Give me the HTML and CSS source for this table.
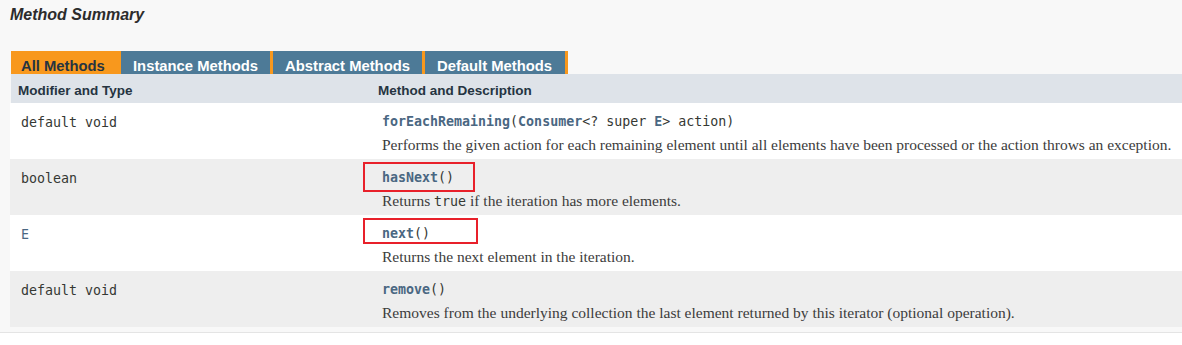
FILE: index.html
```html
<!DOCTYPE html>
<html>
<head>
<meta charset="utf-8">
<link rel="stylesheet" href="styles.css">
</head>
<body>
<div class="page">
  <h3 class="title">Method Summary</h3>
  <div class="tabs">
    <span class="tab tab-active t1">All Methods</span>
    <span class="tab t2">Instance Methods</span>
    <span class="tab t3">Abstract Methods</span>
    <span class="tab t4">Default Methods</span>
  </div>
  <div class="table">
    <div class="row head">
      <div class="c1">Modifier and Type</div>
      <div class="c2">Method and Description</div>
    </div>
    <div class="row odd">
      <div class="c1"><code>default void</code></div>
      <div class="c2">
        <div class="sig"><code><span class="link">forEachRemaining</span>(<span class="link">Consumer</span>&lt;? super <span class="link">E</span>&gt; action)</code></div>
        <div class="desc">Performs the given action for each remaining element until all elements have been processed or the action throws an exception.</div>
      </div>
    </div>
    <div class="row even">
      <div class="c1"><code>boolean</code></div>
      <div class="c2">
        <div class="sig"><code class="marked"><span class="link">hasNext</span>()<span class="hl hl-a"></span></code></div>
        <div class="desc">Returns <code>true</code> if the iteration has more elements.</div>
      </div>
    </div>
    <div class="row odd">
      <div class="c1"><code class="link">E</code></div>
      <div class="c2">
        <div class="sig"><code class="marked"><span class="link">next</span>()<span class="hl hl-b"></span></code></div>
        <div class="desc">Returns the next element in the iteration.</div>
      </div>
    </div>
    <div class="row even">
      <div class="c1"><code>default void</code></div>
      <div class="c2">
        <div class="sig"><code><span class="link">remove</span>()</code></div>
        <div class="desc">Removes from the underlying collection the last element returned by this iterator (optional operation).</div>
      </div>
    </div>
  </div>
</div>
</body>
</html>
```

FILE: styles.css
```css
html {
  background: #ffffff;
}
body {
  margin: 0;
  font-family: "Liberation Sans", Arial, sans-serif;
  color: #353833;
}
.page {
  background: #f8f8f8;
  padding: 0 0 5px 10px;
  border-bottom: 1px solid #e4e4e4;
}
.title {
  margin: 0;
  height: 51px;
  box-sizing: border-box;
  padding-top: 6px;
  font-size: 16px;
  line-height: 18px;
  font-weight: bold;
  font-style: italic;
  color: #2c2c2c;
}
.tabs {
  display: flex;
  height: 23px;
  padding-left: 1px;
}
.tab {
  box-sizing: border-box;
  height: 23px;
  padding: 7px 0 0 12px;
  font-size: 14.8px;
  line-height: 16px;
  font-weight: bold;
  color: #ffffff;
  background: #4d7a97;
  white-space: nowrap;
  border-right: 3px solid #f8981d;
}
.tab-active {
  background: #f8981d;
  color: #253441;
  padding-left: 10px;
  border-right: 0;
}
.t1 { width: 110px; }
.t2 { width: 152px; }
.t3 { width: 152px; }
.t4 { width: 143px; }
.table {
  display: flex;
  flex-direction: column;
}
.row {
  display: grid;
  grid-template-columns: 361px 1fr;
}
.head {
  height: 29px;
  background: #dee3e9;
  font-size: 13.5px;
  font-weight: bold;
  color: #253441;
  line-height: 16px;
  margin-left: 1px;
}
.head .c1 {
  padding: 9px 0 0 7px;
}
.head .c2 {
  padding: 9px 0 0 6px;
}
.odd { background: #ffffff; }
.even { background: #eeeeee; }
.row:not(.head) {
  height: 56px;
}
.row:not(.head) .c1 {
  padding: 10px 0 0 11px;
}
.row:not(.head) .c2 {
  padding: 10px 0 0 11px;
}
code {
  font-family: "DejaVu Sans Mono", "Liberation Mono", monospace;
  font-size: 13.3px;
  line-height: 16px;
  color: #353833;
}
.sig {
  height: 16px;
  line-height: 16px;
}
.link {
  color: #4a6782;
  font-weight: bold;
}
code.link {
  font-weight: normal;
  color: #4a6782;
}
.desc {
  margin-top: 8px;
  font-family: "Liberation Serif", "DejaVu Serif", serif;
  font-size: 15.5px;
  line-height: 16px;
  color: #3c3c3c;
  white-space: nowrap;
}
.desc code {
  font-size: 13.3px;
}
.marked {
  position: relative;
}
.hl {
  position: absolute;
  left: -19px;
  top: -8px;
  box-sizing: border-box;
  border: 2px solid #e8202a;
}
.hl-a {
  width: 112px;
  height: 30px;
}
.hl-b {
  width: 115px;
  height: 26px;
}
```
